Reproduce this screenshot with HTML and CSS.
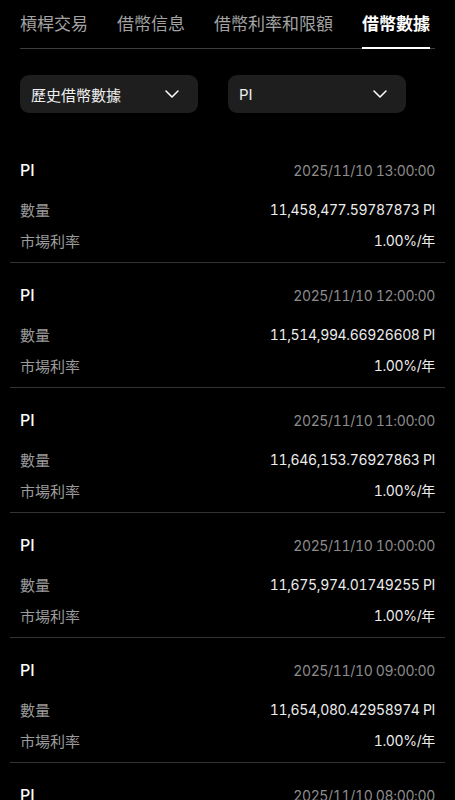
FILE: index.html
```html
<!DOCTYPE html>
<html>
	<head>
		<meta charset="UTF-8">
		<title>借幣數據</title>
		<link rel="stylesheet" href="styles.css">
	</head>
	<body>
		<nav class="tabs">
			<span class="tab">槓桿交易</span>
			<span class="tab">借幣信息</span>
			<span class="tab">借幣利率和限額</span>
			<span class="tab on">借幣數據</span>
		</nav>
		<div class="filters">
			<div class="select">
				<span>歷史借幣數據</span>
				<svg width="14" height="8" viewBox="0 0 14 8"><path d="M1 1l6 6 6-6" fill="none" stroke="#fff" stroke-width="1.5" stroke-linecap="round" stroke-linejoin="round"/></svg>
			</div>
			<div class="select">
				<span>PI</span>
				<svg width="14" height="8" viewBox="0 0 14 8"><path d="M1 1l6 6 6-6" fill="none" stroke="#fff" stroke-width="1.5" stroke-linecap="round" stroke-linejoin="round"/></svg>
			</div>
		</div>
		<div class="list">
			<div class="item">
				<div class="line"><span class="coin">PI</span><span class="time">2025/11/10 13:00:00</span></div>
				<div class="line gap"><span class="lbl">數量</span><span class="val">11,458,477.59787873 PI</span></div>
				<div class="line"><span class="lbl">市場利率</span><span class="val">1.00%/年</span></div>
			</div>
			<div class="item">
				<div class="line"><span class="coin">PI</span><span class="time">2025/11/10 12:00:00</span></div>
				<div class="line gap"><span class="lbl">數量</span><span class="val">11,514,994.66926608 PI</span></div>
				<div class="line"><span class="lbl">市場利率</span><span class="val">1.00%/年</span></div>
			</div>
			<div class="item">
				<div class="line"><span class="coin">PI</span><span class="time">2025/11/10 11:00:00</span></div>
				<div class="line gap"><span class="lbl">數量</span><span class="val">11,646,153.76927863 PI</span></div>
				<div class="line"><span class="lbl">市場利率</span><span class="val">1.00%/年</span></div>
			</div>
			<div class="item">
				<div class="line"><span class="coin">PI</span><span class="time">2025/11/10 10:00:00</span></div>
				<div class="line gap"><span class="lbl">數量</span><span class="val">11,675,974.01749255 PI</span></div>
				<div class="line"><span class="lbl">市場利率</span><span class="val">1.00%/年</span></div>
			</div>
			<div class="item">
				<div class="line"><span class="coin">PI</span><span class="time">2025/11/10 09:00:00</span></div>
				<div class="line gap"><span class="lbl">數量</span><span class="val">11,654,080.42958974 PI</span></div>
				<div class="line"><span class="lbl">市場利率</span><span class="val">1.00%/年</span></div>
			</div>
			<div class="item">
				<div class="line"><span class="coin">PI</span><span class="time">2025/11/10 08:00:00</span></div>
				<div class="line gap"><span class="lbl">數量</span><span class="val">11,661,203.35214470 PI</span></div>
				<div class="line"><span class="lbl">市場利率</span><span class="val">1.00%/年</span></div>
			</div>
		</div>
	</body>
</html>
```

FILE: styles.css
```css
html,body{
	margin:0;
	background:#000;
	color:#fff;
	font-family:Inter,"Noto Sans CJK TC",sans-serif;
}
.tabs{
	display:flex;
	gap:29px;
	margin:0 20px;
	padding-top:12px;
	border-bottom:1px solid #3d3d3d;
}
.tab{
	font-size:17px;
	line-height:24px;
	color:#a3a3a3;
	padding-bottom:11px;
	border-bottom:2px solid transparent;
	margin-bottom:-1px;
	white-space:nowrap;
}
.tab.on{
	color:#fff;
	font-weight:600;
	border-bottom-color:#fff;
}
.filters{
	display:flex;
	gap:30px;
	margin:26px 20px 0;
}
.select{
	width:178px;
	height:38px;
	box-sizing:border-box;
	padding:0 19px 0 11px;
	background:#1e1e1e;
	border-radius:9px;
	display:flex;
	align-items:center;
	justify-content:space-between;
	font-size:15px;
	color:#eee;
}
.list{
	margin:25px 10px 0;
}
.item{
	padding:21px 10px 11px;
	border-bottom:1px solid #333;
}
.line{
	display:flex;
	justify-content:space-between;
	align-items:center;
	height:22px;
	margin-bottom:9px;
	font-size:15px;
}
.line:last-child{
	margin-bottom:0;
}
.line.gap{
	margin-top:17px;
}
.coin{
	font-size:16px;
	font-weight:500;
	color:#fff;
}
.time,.val{
	font-size:14px;
	font-variant-numeric:tabular-nums;
	letter-spacing:-0.35px;
}
.time{
	color:#8c8c8c;
}
.lbl{
	color:#9b9b9b;
}
.val{
	color:#ececec;
}
```
